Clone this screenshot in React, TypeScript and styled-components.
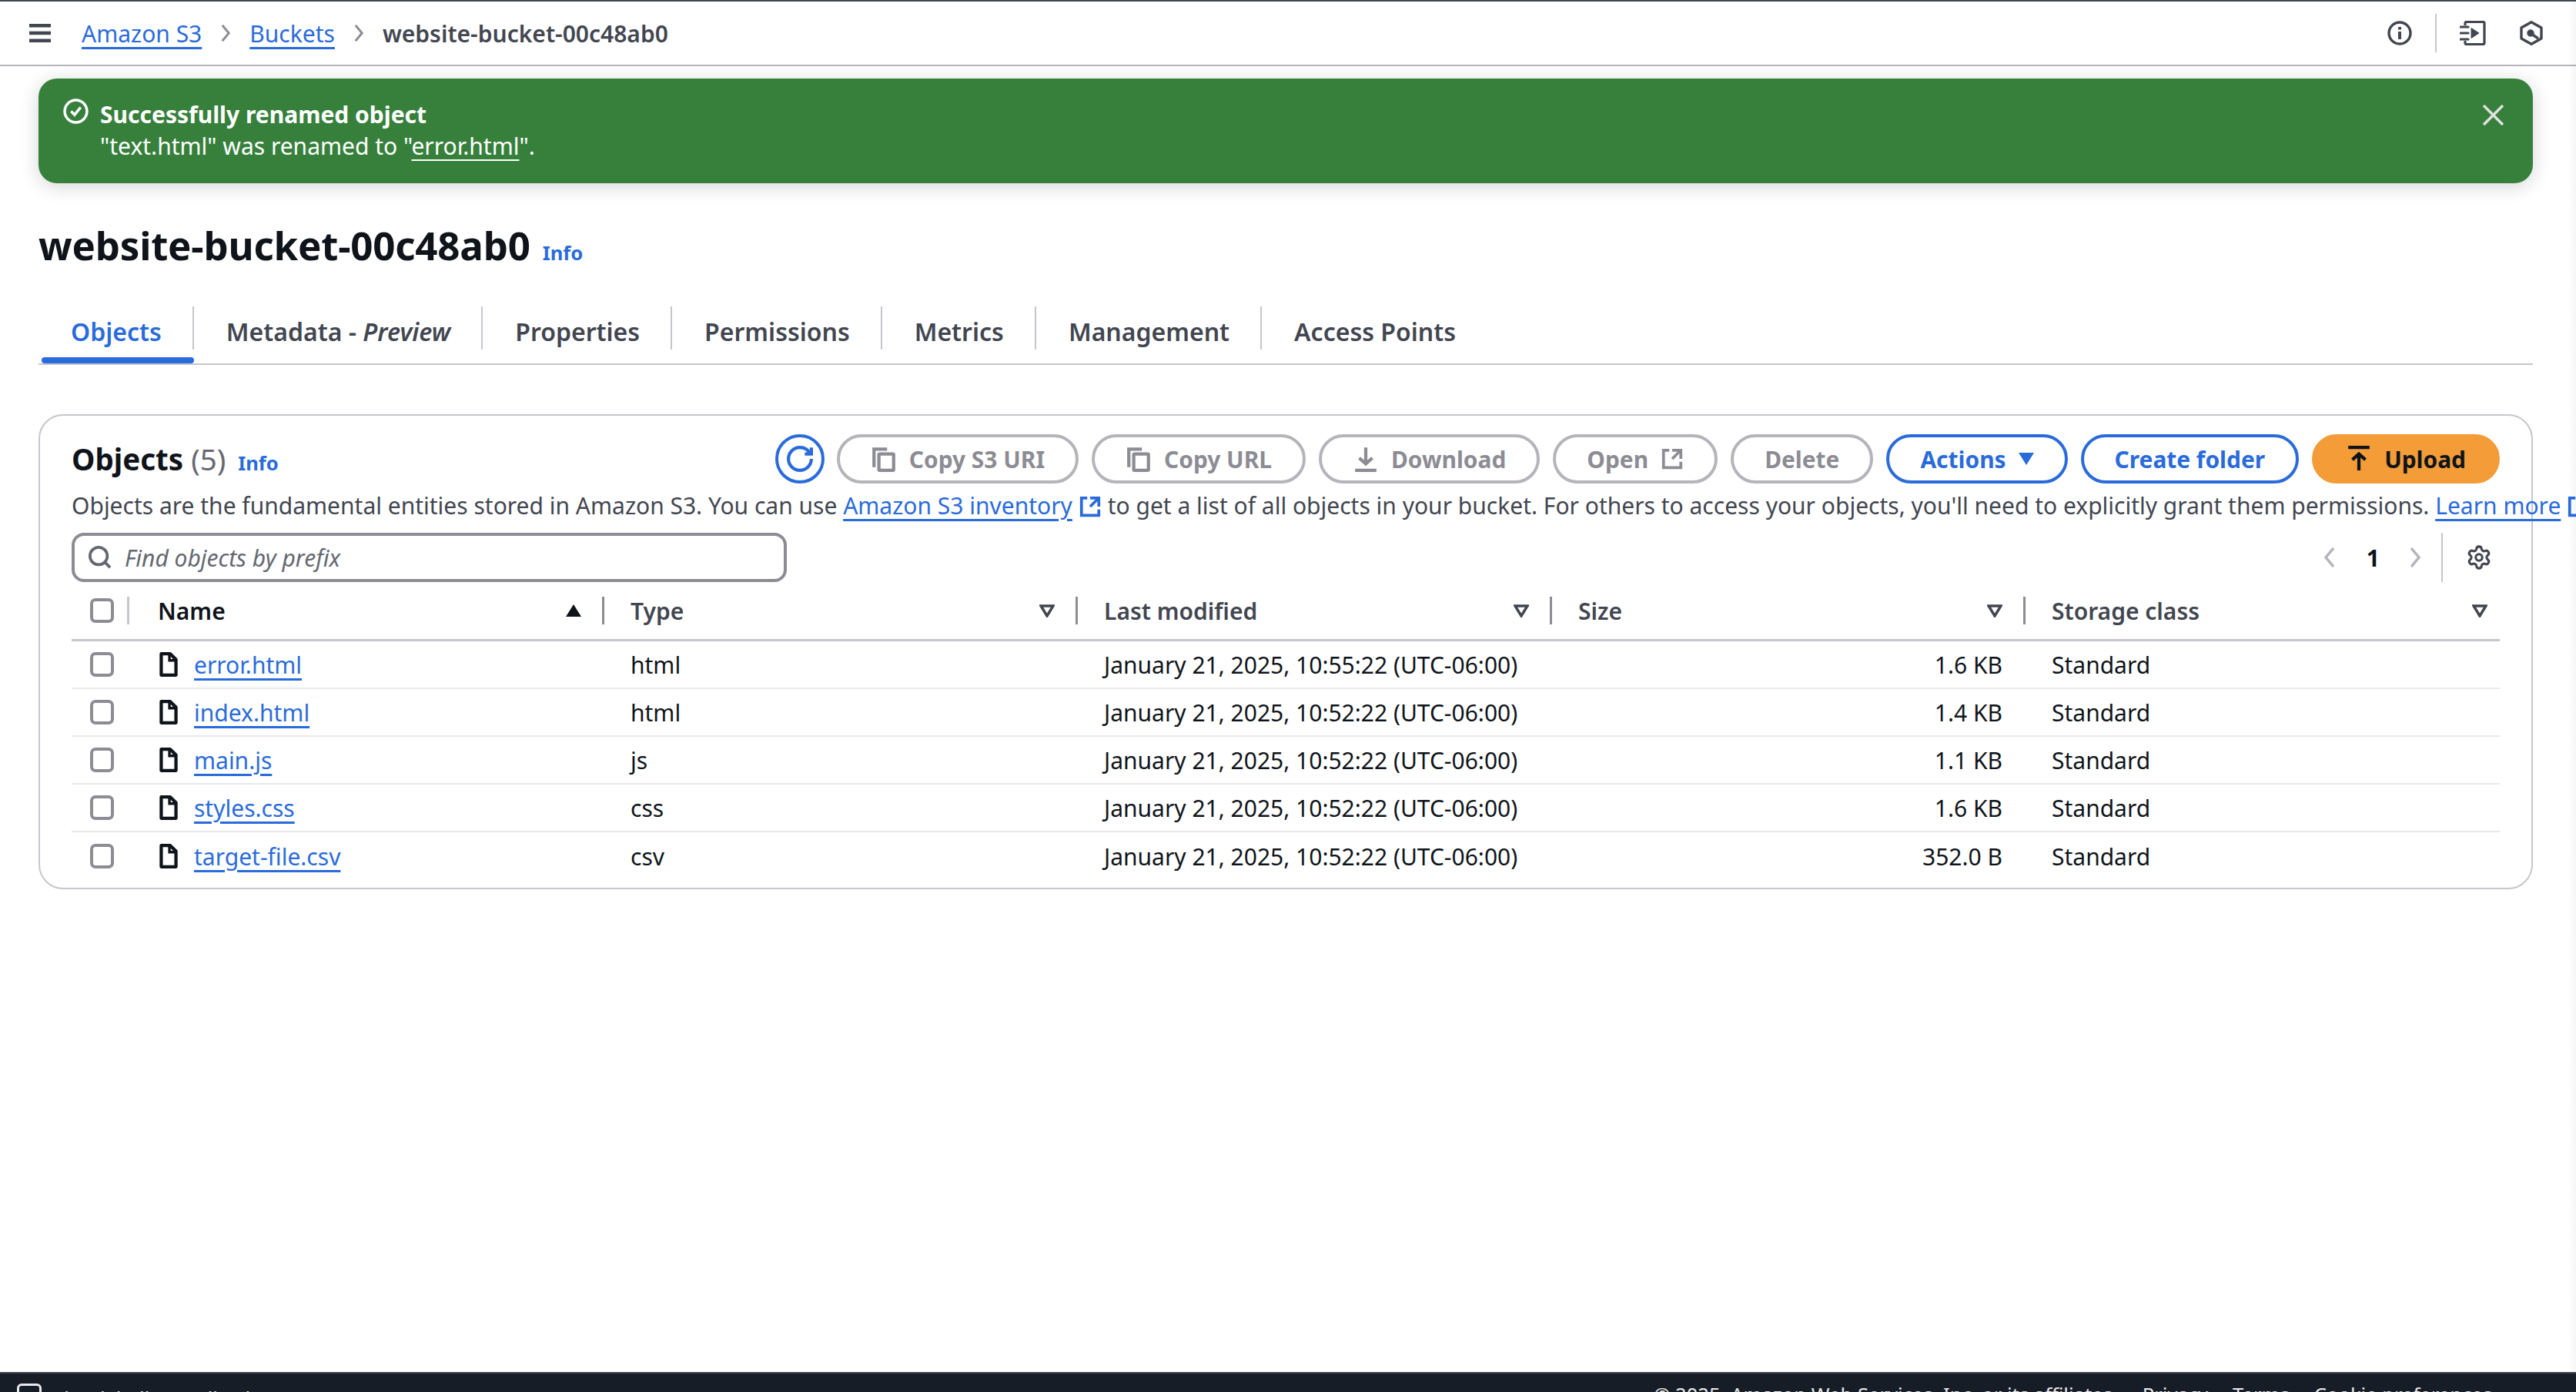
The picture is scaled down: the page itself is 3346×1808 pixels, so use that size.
import React from "react";
import styled, { createGlobalStyle } from "styled-components";
import { Settings } from "lucide-react";

const Global = createGlobalStyle`
  html, body { margin: 0; padding: 0; background: #fff; }
  * { box-sizing: border-box; }
  body { font-family: "Noto Sans", "Open Sans", sans-serif; font-size: 30px; color: #0f141a; }
`;

const Page = styled.div`
  position: relative;
  width: 3346px;
  height: 1808px;
  overflow: hidden;
  display: flex;
  flex-direction: column;
  background: #fff;
  border-top: 2px solid #414750;
`;
const EdgeShade = styled.div`
  position: absolute;
  top: 0;
  right: 0;
  bottom: 26px;
  width: 10px;
  background: linear-gradient(90deg, rgba(0, 0, 0, 0), rgba(0, 0, 0, 0.035));
  pointer-events: none;
`;
const TopBar = styled.header`
  flex: none;
  height: 84px;
  display: flex;
  align-items: center;
  padding: 0 43px 0 38px;
  border-bottom: 2px solid #b6b6bc;
  color: #424650;
`;
const Crumbs = styled.nav`
  flex: 1;
  display: flex;
  align-items: center;
  margin-left: 40px;
  font-weight: 500;
`;
const Link = styled.a`
  color: #2a6bdb;
  font-weight: ${(p: { $w?: number }) => p.$w ?? 400};
  text-decoration: underline;
  text-decoration-thickness: 3px;
  text-underline-offset: 6px;
`;
const CrumbSep = styled.span`
  display: inline-flex;
  margin: 0 23px;
  color: #8c8c94;
`;
const CrumbCurrent = styled.span`
  color: #424650;
  font-weight: 600;
`;
const TopIcons = styled.div`
  display: flex;
  align-items: center;
  color: #424650;
`;
const TopDivider = styled.span`
  width: 2px;
  height: 50px;
  background: #c6c6cd;
  margin: 0 30px;
`;
const Flash = styled.section`
  flex: none;
  margin: 16px 56px 0 50px;
  height: 136px;
  border-radius: 24px;
  background: #37803c;
  color: #fff;
  display: flex;
  align-items: flex-start;
  padding: 26px 38px 0 32px;
  box-shadow: 0 4px 24px rgba(15, 20, 26, 0.18);
`;
const FlashText = styled.div`
  flex: 1;
  margin-left: 15px;
  line-height: 41px;
`;
const FlashTitle = styled.div`
  font-weight: 700;
`;
const FlashLink = styled.span`
  text-decoration: underline;
  text-decoration-thickness: 2px;
  text-underline-offset: 6px;
`;
const Heading = styled.div`
  flex: none;
  margin: 48px 0 0 50px;
  height: 64px;
  display: flex;
  align-items: baseline;
  gap: 16px;
`;
const Title = styled.h1`
  margin: 0;
  font-size: 51px;
  line-height: 64px;
  font-weight: 700;
  letter-spacing: -0.2px;
`;
const InfoLink = styled.a`
  color: #2a6bdb;
  font-size: 25.6px;
  font-weight: 700;
`;
const Tabs = styled.div`
  flex: none;
  margin: 38px 56px 0 50px;
  height: 86px;
  display: flex;
  border-bottom: 2px solid #c6c6cd;
`;
const Tab = styled.div<{ $active?: boolean; $last?: boolean }>`
  position: relative;
  height: 84px;
  padding: 0 42px;
  display: flex;
  align-items: center;
  font-size: 32px;
  font-weight: 600;
  color: ${(p) => (p.$active ? "#2a6bdb" : "#424650")};
  &::after {
    content: "";
    display: ${(p) => (p.$last ? "none" : "block")};
    position: absolute;
    right: 0;
    top: 10px;
    height: 56px;
    width: 2px;
    background: #c6c6cd;
  }
  &::before {
    content: "";
    display: ${(p) => (p.$active ? "block" : "none")};
    position: absolute;
    left: 4px;
    right: 0;
    bottom: 0;
    height: 8px;
    border-radius: 4px;
    background: #2a6bdb;
  }
`;
const Card = styled.section`
  flex: none;
  margin: 64px 56px 0 50px;
  height: 617px;
  border: 2px solid #c6c6cd;
  border-radius: 32px;
  padding: 24px 41px 0;
`;
const CardTop = styled.div`
  height: 64px;
  display: flex;
  align-items: center;
  justify-content: space-between;
`;
const CardTitle = styled.div`
  display: flex;
  align-items: baseline;
  gap: 16px;
`;
const CardH = styled.h2`
  margin: 0;
  font-size: 38.5px;
  font-weight: 700;
`;
const Count = styled.span`
  font-weight: 400;
  color: #656871;
`;
const Actions = styled.div`
  display: flex;
  align-items: center;
  gap: 17px;
`;
type Kind = "off" | "blue" | "primary";
const kindColor = { off: "#8c8c94", blue: "#2a6bdb", primary: "#0f141a" };
const kindBorder = { off: "#b4b4bb", blue: "#2a6bdb", primary: "#f39c38" };
const Btn = styled.button<{ $kind: Kind }>`
  height: 64px;
  display: flex;
  align-items: center;
  gap: 16px;
  padding: 0 40px;
  border-radius: 32px;
  border: 4px solid ${(p) => kindBorder[p.$kind]};
  background: ${(p) => (p.$kind === "primary" ? "#f39c38" : "#fff")};
  color: ${(p) => kindColor[p.$kind]};
  font: 700 29.9px "Noto Sans", sans-serif;
  white-space: nowrap;
`;
const IconBtn = styled(Btn)`
  width: 64px;
  padding: 0;
  justify-content: center;
  margin-right: -1px;
`;
const Desc = styled.p`
  margin: 0;
  height: 58px;
  line-height: 58px;
  color: #424650;
  white-space: nowrap;
`;
const ExtWrap = styled.span`
  display: inline-block;
  margin-left: 8px;
  vertical-align: -5px;
  color: #2a6bdb;
`;
const FilterRow = styled.div`
  margin-top: 6px;
  height: 64px;
  display: flex;
  align-items: center;
  justify-content: space-between;
`;
const Search = styled.div`
  width: 929px;
  height: 64px;
  border: 4px solid #8c8c94;
  border-radius: 16px;
  display: flex;
  align-items: center;
  gap: 17px;
  padding-left: 18px;
  color: #656871;
`;
const Placeholder = styled.span`
  font-style: italic;
  color: #656871;
`;
const Pager = styled.div`
  display: flex;
  align-items: center;
  height: 64px;
  color: #b4b4bb;
`;
const PageNum = styled.span`
  color: #0f141a;
  font-weight: 700;
  margin: 0 38px 0 40px;
`;
const PagerDivider = styled.span`
  width: 2px;
  height: 64px;
  background: #c6c6cd;
  margin: 0 30px 0 26px;
`;
const Gear = styled.span`
  display: inline-flex;
  color: #424650;
  margin-right: 10px;
`;
const COLS = "75px 617px 615px 616px 615px 1fr";
const HeadRow = styled.div`
  height: 77px;
  display: grid;
  grid-template-columns: ${COLS};
  border-bottom: 3px solid #c6c6cd;
`;
const HeadCheck = styled.div`
  display: flex;
  align-items: center;
  padding: 0 0 0 24px;
  justify-content: space-between;
`;
const HeadCell = styled.div<{ $last?: boolean }>`
  display: flex;
  align-items: center;
  padding-left: ${(p) => (p.$last ? 34 : 37)}px;
  font-weight: 600;
  color: #424650;
`;
const HeadLabel = styled.span<{ $dark?: boolean }>`
  flex: 1;
  color: ${(p) => (p.$dark ? "#0f141a" : "#424650")};
`;
const ColSep = styled.span<{ $light?: boolean }>`
  width: 3px;
  height: 36px;
  background: ${(p) => (p.$light ? "#c6c6cd" : "#8c8c94")};
  margin-left: ${(p) => (p.$light ? 0 : 27)}px;
`;
const Caret = styled.span<{ $end?: boolean }>`
  display: inline-flex;
  color: #424650;
  margin-right: ${(p) => (p.$end ? 16 : 0)}px;
`;
const Row = styled.div<{ $last?: boolean }>`
  height: 62px;
  display: grid;
  grid-template-columns: ${COLS};
  align-items: center;
  border-bottom: ${(p) => (p.$last ? "none" : "2px solid #e9e9ed")};
`;
const CheckCell = styled.div`
  padding-left: 24px;
  display: flex;
`;
const Check = styled.span`
  display: block;
  width: 31px;
  height: 32px;
  border: 4px solid #8c8c94;
  border-radius: 7px;
  background: #fff;
`;
const NameCell = styled.div`
  display: flex;
  align-items: center;
  gap: 16px;
  padding-left: 34px;
`;
const Cell = styled.div`
  padding-left: 34px;
`;
const NumCell = styled.div`
  text-align: right;
  padding-right: 30px;
`;
const Spacer = styled.div`
  flex: 1;
`;
const Footer = styled.footer`
  flex: none;
  height: 26px;
  overflow: hidden;
  background: #161d26;
  border-top: 2px solid #414750;
  color: #e9e9ed;
  display: flex;
  align-items: flex-start;
  justify-content: space-between;
  padding: 0 109px 0 22px;
  font-size: 25.6px;
  line-height: 40px;
`;
const FooterLeft = styled.div`
  display: flex;
  padding-top: 13px;
`;
const FooterShell = styled.span`
  margin-left: 13px;
`;
const FooterFeedback = styled.span`
  margin-left: 24px;
`;
const FooterIcon = styled.span`
  display: block;
  width: 32px;
  height: 32px;
  border: 3px solid #e9e9ed;
  border-radius: 6px;
  margin-top: 0;
`;
const FooterRight = styled.div`
  display: flex;
  padding-top: 8px;
  gap: 32px;
`;

type IP = { s?: number; w?: number };
const Svg: React.FC<IP & { children: React.ReactNode }> = ({ s = 34, w = 2, children }) => (
  <svg width={s} height={s} viewBox="0 0 16 16" fill="none" stroke="currentColor" strokeWidth={w} style={{ display: "block", flex: "none" }}>
    {children}
  </svg>
);
const MenuIcon = () => (
  <svg width="28" height="24" viewBox="0 0 28 24" style={{ display: "block" }} fill="currentColor">
    <rect width="28" height="4.5" y="0" />
    <rect width="28" height="4.5" y="9.7" />
    <rect width="28" height="4.5" y="19.5" />
  </svg>
);
const Chev: React.FC<{ left?: boolean; h?: number }> = ({ left, h = 26 }) => (
  <svg width="16" height={h} viewBox="0 0 16 26" fill="none" stroke="currentColor" strokeWidth="3.5" style={{ display: "block" }}>
    <path d={left ? "M13 1 L3 13 L13 25" : "M3 1 L13 13 L3 25"} />
  </svg>
);
const Ext: React.FC = () => (
  <Svg s={30}>
    <path d="M14 8.01v-6H8" />
    <path d="M14 2 8 8" />
    <path d="M6 2H2v12h12v-4" />
  </Svg>
);
const Success = () => (
  <Svg s={33} w={1.7}>
    <circle cx="8" cy="8" r="7" />
    <path d="m5 8 2.2 2.2L11 5.5" />
  </Svg>
);
const Close = () => (
  <svg width="27" height="27" viewBox="0 0 27 27" stroke="#e0e0e0" strokeWidth="3.5" style={{ display: "block", marginTop: 8 }}>
    <path d="M1 1l25 25M26 1 1 26" />
  </svg>
);
const Refresh = () => (
  <Svg s={34}>
    <path d="M15 8c0 3.87-3.13 7-7 7s-7-3.13-7-7 3.13-7 7-7c2.79 0 5.2 1.63 6.33 4" />
    <path d="M15 1v4h-4" />
  </Svg>
);
const Copy = () => (
  <Svg s={34}>
    <path d="M2 13V2h8" />
    <rect x="5" y="5" width="9" height="10" rx="0.5" />
  </Svg>
);
const Download = () => (
  <Svg s={34}>
    <path d="M8 1v10M4 7.5 8 11l4-3.5" />
    <path d="M1.5 15h13" />
  </Svg>
);
const Upload = () => (
  <Svg s={34}>
    <path d="M8 15V5M4 8.5 8 5l4 3.5" />
    <path d="M1.5 1h13" />
  </Svg>
);
const CaretDown = () => (
  <svg width="20" height="16" viewBox="0 0 20 16" style={{ display: "block" }} fill="currentColor">
    <path d="M0 0h20L10 16Z" />
  </svg>
);
const CaretUp = () => (
  <svg width="20" height="16" viewBox="0 0 20 16" style={{ display: "block" }} fill="#0f141a">
    <path d="M10 0l10 16H0Z" />
  </svg>
);
const FilterCaret = () => (
  <svg width="20" height="17" viewBox="0 0 20 17" style={{ display: "block" }} fill="none" stroke="currentColor" strokeWidth="3.5">
    <path d="M2 2h16l-8 13Z" />
  </svg>
);
const SearchIcon = () => (
  <Svg s={30}>
    <circle cx="7" cy="7" r="6" />
    <path d="m11.5 11.5 3.5 3.5" />
  </Svg>
);
const FileIcon = () => (
  <svg width="34" height="34" viewBox="0 0 16 16" fill="none" stroke="#0f141a" strokeWidth="2" style={{ display: "block", flex: "none" }}>
    <path d="M9 1.5H3.5v13h9V5Z" strokeLinejoin="round" />
    <path d="M8.5 1.5V5.5h4" strokeWidth="1.6" />
  </svg>
);
const InfoIcon = () => (
  <Svg s={32} w={1.7}>
    <circle cx="8" cy="8" r="7" />
    <path d="M8 7v5M8 4v1.8" strokeWidth="2" />
  </Svg>
);
const Notebook = () => (
  <svg width="34" height="32" viewBox="0 0 34 32" style={{ display: "block" }} fill="none" stroke="currentColor" strokeWidth="3.2">
    <path d="M7 6V3a1.500 1.500 0 0 1 1.500-1.500h22a1.500 1.500 0 0 1 1.500 1.500v26a1.500 1.500 0 0 1-1.500 1.500h-22A1.500 1.500 0 0 1 7 29v-3" strokeLinejoin="round" />
    <path d="M1 8h10M1 16h10M1 24h10" strokeLinecap="round" />
    <path d="M15 9.500v13L25 16Z" fill="currentColor" strokeWidth="1" />
  </svg>
);
const KeyHex = () => (
  <svg width="30" height="32" viewBox="0 0 30 32" style={{ display: "block", marginLeft: 44 }} fill="none" stroke="currentColor" strokeWidth="3.4" strokeLinejoin="round">
    <path d="M15 1.800 28 9v14l-13 7.200L2 23V9Z" />
    <circle cx="14" cy="16" r="3" fill="currentColor" />
    <path d="M15 17l9 6" />
  </svg>
);

const files = [
  ["error.html", "html", "January 21, 2025, 10:55:22 (UTC-06:00)", "1.6 KB"],
  ["index.html", "html", "January 21, 2025, 10:52:22 (UTC-06:00)", "1.4 KB"],
  ["main.js", "js", "January 21, 2025, 10:52:22 (UTC-06:00)", "1.1 KB"],
  ["styles.css", "css", "January 21, 2025, 10:52:22 (UTC-06:00)", "1.6 KB"],
  ["target-file.csv", "csv", "January 21, 2025, 10:52:22 (UTC-06:00)", "352.0 B"],
];
const heads = ["Type", "Last modified", "Size"];
const tabs = ["Properties", "Permissions", "Metrics", "Management"];

export default function App() {
  return (
    <Page>
      <Global />
      <TopBar>
        <MenuIcon />
        <Crumbs>
          <Link>Amazon S3</Link>
          <CrumbSep><Chev h={22} /></CrumbSep>
          <Link>Buckets</Link>
          <CrumbSep><Chev h={22} /></CrumbSep>
          <CrumbCurrent>website-bucket-00c48ab0</CrumbCurrent>
        </Crumbs>
        <TopIcons>
          <InfoIcon />
          <TopDivider />
          <Notebook />
          <KeyHex />
        </TopIcons>
      </TopBar>
      <Flash>
        <Success />
        <FlashText>
          <FlashTitle>Successfully renamed object</FlashTitle>
          <div>"text.html" was renamed to "<FlashLink>error.html</FlashLink>".</div>
        </FlashText>
        <Close />
      </Flash>
      <Heading>
        <Title>website-bucket-00c48ab0</Title>
        <InfoLink>Info</InfoLink>
      </Heading>
      <Tabs>
        <Tab $active>Objects</Tab>
        <Tab>Metadata -&nbsp;<em>Preview</em></Tab>
        {tabs.map((t) => <Tab key={t}>{t}</Tab>)}
        <Tab $last>Access Points</Tab>
      </Tabs>
      <Card>
        <CardTop>
          <CardTitle>
            <CardH>Objects <Count>(5)</Count></CardH>
            <InfoLink>Info</InfoLink>
          </CardTitle>
          <Actions>
            <IconBtn $kind="blue"><Refresh /></IconBtn>
            <Btn $kind="off"><Copy />Copy S3 URI</Btn>
            <Btn $kind="off"><Copy />Copy URL</Btn>
            <Btn $kind="off"><Download />Download</Btn>
            <Btn $kind="off">Open<Ext /></Btn>
            <Btn $kind="off">Delete</Btn>
            <Btn $kind="blue">Actions<CaretDown /></Btn>
            <Btn $kind="blue">Create folder</Btn>
            <Btn $kind="primary"><Upload />Upload</Btn>
          </Actions>
        </CardTop>
        <Desc>
          Objects are the fundamental entities stored in Amazon S3. You can use <Link>Amazon S3 inventory</Link><ExtWrap><Ext /></ExtWrap> to get a list of all objects in your bucket. For others to access your objects, you'll need to explicitly grant them permissions. <Link>Learn more</Link><ExtWrap><Ext /></ExtWrap>
        </Desc>
        <FilterRow>
          <Search>
            <SearchIcon />
            <Placeholder>Find objects by prefix</Placeholder>
          </Search>
          <Pager>
            <Chev left />
            <PageNum>1</PageNum>
            <Chev />
            <PagerDivider />
            <Gear><Settings size={34} strokeWidth={2.2} /></Gear>
          </Pager>
        </FilterRow>
        <HeadRow>
          <HeadCheck>
            <Check />
            <ColSep $light />
          </HeadCheck>
          <HeadCell>
            <HeadLabel $dark>Name</HeadLabel>
            <CaretUp />
            <ColSep />
          </HeadCell>
          {heads.map((h) => (
            <HeadCell key={h} $last>
              <HeadLabel>{h}</HeadLabel>
              <Caret><FilterCaret /></Caret>
              <ColSep />
            </HeadCell>
          ))}
          <HeadCell $last>
            <HeadLabel>Storage class</HeadLabel>
            <Caret $end><FilterCaret /></Caret>
          </HeadCell>
        </HeadRow>
        {files.map((f, i) => (
          <Row key={f[0]} $last={i === files.length - 1}>
            <CheckCell><Check /></CheckCell>
            <NameCell>
              <FileIcon />
              <Link>{f[0]}</Link>
            </NameCell>
            <Cell>{f[1]}</Cell>
            <Cell>{f[2]}</Cell>
            <NumCell>{f[3]}</NumCell>
            <Cell>Standard</Cell>
          </Row>
        ))}
      </Card>
      <Spacer />
      <Footer>
        <FooterLeft>
          <FooterIcon />
          <FooterShell>CloudShell</FooterShell>
          <FooterFeedback>Feedback</FooterFeedback>
        </FooterLeft>
        <FooterRight>
          <span>© 2025, Amazon Web Services, Inc. or its affiliates.</span>
          <span>Privacy</span>
          <span>Terms</span>
          <span>Cookie preferences</span>
        </FooterRight>
      </Footer>
      <EdgeShade />
    </Page>
  );
}
